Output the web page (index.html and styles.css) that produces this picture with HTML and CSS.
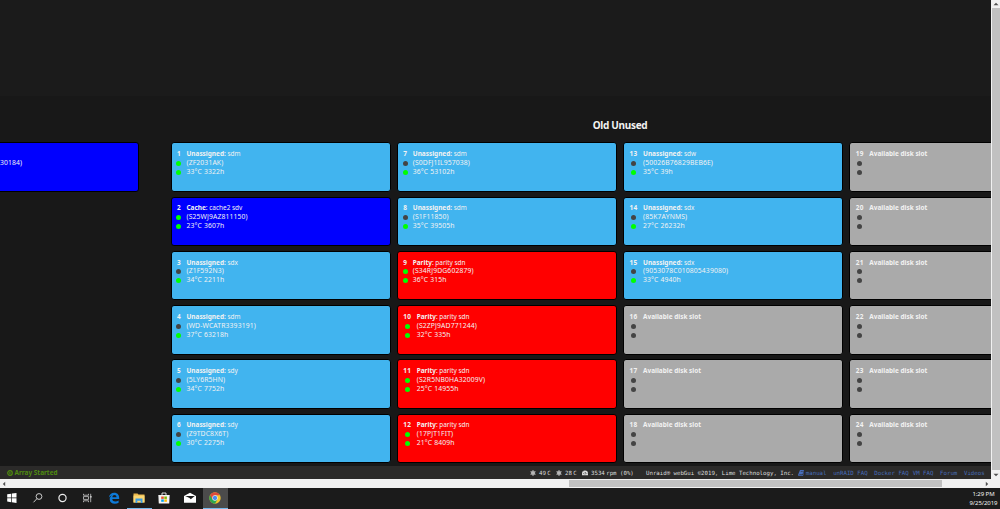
FILE: index.html
```html
<!DOCTYPE html>
<html lang="en">
<head>
  <meta charset="UTF-8">
  <title>Disk Location</title>
  <link rel="stylesheet" href="styles.css">
</head>
<body>

<div class="browser">
  <div class="view">
    <div class="page">
      <div class="top"></div>
      <h2>Old Unused</h2>
      <div class="trays">
        <div class="group previous">
          <div class="disk cache"><div class="text"><span class="serial">30184)</span></div></div>
        </div>
        <div class="group" id="disks"></div>
      </div>
    </div>

    <div class="footer">
      <span class="status">
        <svg viewBox="0 0 12 12"><circle cx="6" cy="6" r="4.600" fill="none" stroke="currentColor" stroke-width="2.400"/><path d="M4.600 3.600 8.600 6 4.600 8.400z" fill="currentColor"/></svg>
        <b>Array Started</b>
      </span>
      <span class="sensors">
        <svg viewBox="0 0 12 12"><path d="M6 .3v11.400M1.100 3.100l9.800 5.800M10.900 3.100 1.100 8.900" fill="none" stroke="currentColor" stroke-width="1.500"/><circle cx="6" cy="6" r="3.700" fill="none" stroke="currentColor" stroke-width="1.200"/></svg>
        <span class="temp">49<span class="thin"> </span>C</span>
        <svg viewBox="0 0 12 12"><path d="M6 .3v11.400M1.100 3.100l9.800 5.800M10.900 3.100 1.100 8.900" fill="none" stroke="currentColor" stroke-width="1.500"/><circle cx="6" cy="6" r="3.700" fill="none" stroke="currentColor" stroke-width="1.200"/></svg>
        <span class="temp">28<span class="thin"> </span>C</span>
        <svg viewBox="0 0 12 12"><path d="M0 10.500V7a6 6 0 0 1 12 0v3.500z" fill="currentColor"/><path d="M6 9 7 4M2 7h1.500M9 7h1.500M3.500 3.500l1 1" stroke="#2b2a29" stroke-width="1.200"/></svg>
        <span class="fan">3534<span class="thin"> </span>rpm (0%)</span>
      </span>
      <span class="copyright">Unraid® webGui ©2019, Lime Technology, Inc.</span>
      <span class="links">
        <a class="manual"><svg viewBox="0 0 12 12"><path d="M4 0h8L9 9H3q-1.500 1 0 1.500h6.500L11.500 4 12 5l-2 7H2Q-.5 11 .5 8.500z" fill="currentColor"/><path d="M5.500 3h4" stroke="#2b2a29"/></svg>manual</a>
        <a>unRAID FAQ</a>
        <a class="docker">Docker FAQ</a>
        <a>VM FAQ</a>
        <a>Forum</a>
        <a>Videos</a>
      </span>
    </div>
  </div>

  <div class="vscroll">
    <svg viewBox="0 0 8 8"><path d="M1.500 5.300 4 2.700l2.500 2.600z"/></svg>
    <div class="thumb"></div>
    <svg viewBox="0 0 8 8"><path d="M1.500 2.700 4 5.300l2.500-2.600z"/></svg>
  </div>
</div>

<div class="hscroll">
  <svg viewBox="0 0 8 8"><path d="M5.200 1.700 2.800 4l2.400 2.300z"/></svg>
  <div class="thumb"></div>
  <svg viewBox="0 0 8 8"><path d="M2.800 1.700 5.200 4 2.800 6.300z"/></svg>
</div>

<div class="taskbar">
  <div class="app">
    <svg viewBox="0 0 12 12"><path d="M1.200 2.300 5.200 1.700v3.900h-4zM5.900 1.600l4.600-.7v4.700H5.900zM1.200 6.300h4v3.900l-4-.6zM5.900 6.300h4.600V11l-4.600-.7z" fill="#fff"/></svg>
  </div>
  <div class="app">
    <svg viewBox="0 0 12 12" fill="none" stroke="#ddd" stroke-width=".9"><circle cx="7" cy="4.500" r="2.900"/><path d="M5 6.600 1.500 10.300"/></svg>
  </div>
  <div class="app">
    <svg viewBox="0 0 12 12"><circle cx="5.500" cy="6" r="3.600" fill="none" stroke="#eee" stroke-width="1.200"/></svg>
  </div>
  <div class="app">
    <svg viewBox="0 0 12 12" fill="none" stroke="#ccc" stroke-width=".8"><path d="M1.500 1.800v1.400h5V1.800M1.500 10.200V8.800h5v1.400M1.500 4.600h5v2.800h-5zM8.700 1.800v8.400"/><path d="M7.900 4.800h1.800" stroke-width="1.400"/></svg>
  </div>
  <div class="app">
    <svg viewBox="0 0 12 12"><path d="M.8 5.700C1.400 2.300 3.500.7 6.200.7c3.200 0 5 2.200 5 5.200v1.200H4.300c.1 1.800 1.500 2.400 3 2.400 1.200 0 2.300-.3 3.300-.9v2.200c-1 .6-2.300.9-3.800.9-3.100 0-5.100-1.600-5.100-4.500 0-1.700.9-3.200 2.500-4C2.500 3.600 1.500 4.500.8 5.700zM4.400 5.200h4.100C8.500 3.800 7.700 3 6.500 3S4.500 3.900 4.400 5.200z" fill="#0e7ad8"/></svg>
  </div>
  <div class="app open">
    <svg viewBox="0 0 12 12"><path d="M.5 1.500h4l1 1h6v8H.5z" fill="#e9b64a"/><path d="M.5 3.500h11v7H.5z" fill="#fbd774"/><path d="M2.500 11V6.500h7V11H7.700V8.800H4.300V11z" fill="#3d9be0"/></svg>
  </div>
  <div class="app">
    <svg viewBox="0 0 12 12"><path d="M4 3V1h4v2" fill="none" stroke="#eee" stroke-width=".9"/><path d="M.3 3h11.400l-.5 8.500H.8z" fill="#f4f4f4"/><path d="M3.200 4.500h2.600v2.400H3.200z" fill="#e8502e"/><path d="M6.300 4.500h2.600v2.400H6.300z" fill="#7fba00"/><path d="M3.200 7.400h2.600v2.400H3.200z" fill="#00a4ef"/><path d="M6.300 7.400h2.600v2.400H6.300z" fill="#ffb900"/></svg>
  </div>
  <div class="app">
    <svg viewBox="0 0 12 12"><path d="M0 4 6 .8 12 4v6.700H0z" fill="#fff"/><path d="M1.200 4h9.600L6.800 7.200 5.500 6z" fill="#1b1b1b"/></svg>
  </div>
  <div class="app open active">
    <svg viewBox="0 0 12 12"><circle cx="6" cy="6" r="5.700" fill="#f5c52c"/><path d="M6 6 1.060 3.150A5.700 5.700 0 0 0 6 11.700L8.400 7.400z" fill="#2da94f"/><path d="M1.060 3.150A5.700 5.700 0 0 1 10.940 3.150H6L3.500 7.400z" fill="#e04a3b"/><circle cx="6" cy="6" r="2.700" fill="#f4f4f4"/><circle cx="6" cy="6" r="2.150" fill="#4a8bf0"/></svg>
  </div>
  <div class="clock">1:29 PM<br>9/25/2019</div>
</div>

<script>
  // label, device, serial, temperature and hours, first led lit
  const disks = [
    ["<b>Unassigned:</b>", "sdm", "ZF2031AK", "33°C 3322h", 1],
    ["<b>Cache</b>:", "cache2 sdv", "S25WJ9AZ811150", "23°C 3607h", 1],
    ["<b>Unassigned:</b>", "sdx", "Z1F592N3", "34°C 2211h", 0],
    ["<b>Unassigned:</b>", "sdm", "WD-WCATR3393191", "37°C 63218h", 0],
    ["<b>Unassigned:</b>", "sdy", "5LY6R5HN", "34°C 7752h", 0],
    ["<b>Unassigned:</b>", "sdy", "Z9TDC8X6T", "30°C 2275h", 0],
    ["<b>Unassigned:</b>", "sdm", "S0DFJ1IL957038", "36°C 53102h", 0],
    ["<b>Unassigned:</b>", "sdm", "S1F11850", "35°C 39505h", 0],
    ["<b>Parity</b>:", "parity sdn", "S34RJ9DG602879", "36°C 315h", 1],
    ["<b>Parity</b>:", "parity sdn", "S2ZPJ9AD771244", "32°C 335h", 1],
    ["<b>Parity</b>:", "parity sdn", "S2R5NB0HA32009V", "25°C 14955h", 1],
    ["<b>Parity</b>:", "parity sdn", "17PJT1FIT", "21°C 8409h", 1],
    ["<b>Unassigned:</b>", "sdw", "50026B76829BEB6E", "35°C 39h", 0],
    ["<b>Unassigned:</b>", "sdx", "85K7AYNMS", "27°C 26232h", 0],
    ["<b>Unassigned:</b>", "sdx", "9053078C010805439080", "33°C 4940h", 0]
  ];

  let html = "";
  for (let i = 0; i < 24; i++) {
    const d = disks[i];
    const type = d ? d[0].match(/[A-Z]\w+/)[0].toLowerCase() : "empty";
    const title = d ? `${d[0]} ${d[1]}` : "<b>Available disk slot</b>";
    html += `<div class="disk ${type}">
      <div class="leds"><b>${i + 1}</b><i class="${d && d[4] ? "on" : ""}"></i><i class="${d ? "on" : ""}"></i></div>
      <div class="text"><div>${title}</div>${d ? `<div class="serial">(${d[2]})</div><div class="hours">${d[3]}</div>` : ""}</div>
    </div>`;
  }
  document.getElementById("disks").innerHTML = html;
</script>

</body>
</html>
```
FILE: styles.css
```css
* {
  box-sizing: border-box;
}
body {
  margin: 0;
  height: 509px;
  overflow: hidden;
  background: #1b1b1b;
  color: #f2f2f2;
  font-family: "Noto Sans", sans-serif;
}
svg {
  display: block;
  flex: none;
}
.browser {
  display: flex;
  height: 479px;
}
.view {
  width: 991px;
  overflow: hidden;
  background: #181818;
}
.page {
  height: 466px;
  overflow: hidden;
}
.top {
  height: 96px;
  background: #1b1b1b;
}
h2 {
  margin: 0 0 0 249px;
  padding-top: 20px;
  height: 46.300px;
  font-size: 10px;
  line-height: 18px;
  letter-spacing: -.3px;
  text-align: center;
}
.trays {
  display: flex;
  gap: 31.500px;
}
.group {
  display: grid;
  grid-auto-flow: column;
  grid-template-rows: repeat(6, 49.500px);
  grid-auto-columns: 220.400px;
  gap: 4.800px 5.900px;
  flex: none;
}
.previous {
  width: 139px;
  grid-auto-columns: 142px;
  justify-content: end;
}
.disk {
  display: flex;
  align-items: flex-start;
  gap: 5.500px;
  padding: 6.700px 5.500px;
  border: 1.500px solid #000;
  border-radius: 3px;
  font-size: 6.450px;
  line-height: 8.900px;
  white-space: nowrap;
}
.previous .disk {
  padding: 15.600px 0 0 2px;
}
.unassigned {
  background: #41b4ef;
}
.cache {
  background: #0000ff;
}
.parity {
  background: #ff0000;
}
.empty {
  background: #aaa;
}
.leds {
  display: flex;
  flex-direction: column;
  align-items: center;
}
.leds b {
  letter-spacing: .3px;
}
.leds i {
  width: 5px;
  height: 5px;
  margin: 2px -1px 1.800px;
  border-radius: 50%;
  background: #444;
}
.leds .on {
  background: #00ff00;
}
.serial,
.hours {
  font-size: 6.800px;
  letter-spacing: .13px;
}
.footer {
  display: flex;
  align-items: center;
  height: 13px;
  background: #2b2a29;
  font-family: "DejaVu Sans Mono", monospace;
  font-size: 5.720px;
  white-space: pre;
}
.footer > span {
  flex: none;
}
.footer svg {
  width: 6px;
  height: 6px;
}
.status {
  display: flex;
  align-items: center;
  gap: 1.500px;
  width: 523px;
  padding-left: 7px;
  color: #4f8a10;
  font-family: "Noto Sans", sans-serif;
  font-size: 6.450px;
}
.sensors {
  display: flex;
  align-items: center;
  gap: 3px;
  width: 116px;
  padding-left: 7px;
  color: #ddd;
}
.sensors .temp {
  width: 14px;
}
.thin {
  letter-spacing: -2px;
}
.copyright {
  width: 158.500px;
  padding-left: 7px;
  color: #ddd;
}
.links {
  display: flex;
  color: #486dba;
}
.links a {
  margin-right: 6.700px;
}
.links .manual {
  display: flex;
  align-items: center;
  gap: 2.300px;
}
.links .docker {
  margin-right: 4px;
}
.vscroll {
  display: flex;
  flex-direction: column;
  width: 9px;
  padding: 0 .5px;
  background: #f1f1f1;
}
.vscroll svg,
.hscroll svg {
  width: 8px;
  height: 8px;
  fill: #505050;
}
.vscroll .thumb {
  flex: 1;
  margin-bottom: 1.500px;
  background: #c1c1c1;
}
.hscroll {
  display: flex;
  align-items: center;
  height: 9px;
  padding-right: 9px;
  background: #f1f1f1;
}
.hscroll .thumb {
  width: 373px;
  height: 7px;
  margin: 0 auto 0 561px;
  background: #c1c1c1;
}
.taskbar {
  display: flex;
  height: 21px;
  background: #1b1b1b;
}
.app {
  display: flex;
  align-items: center;
  justify-content: center;
  width: 25.350px;
  padding-right: 1px;
  border-bottom: 1px solid transparent;
}
.app:nth-child(n + 8) {
  padding-right: 0;
}
.app svg {
  width: 12px;
  height: 12px;
}
.open {
  border-bottom-color: #76b9ed;
}
.active {
  background: #4b4b4b;
}
.clock {
  margin-left: auto;
  padding: 1.500px 2.500px 0 0;
  font-size: 6px;
  line-height: 9.500px;
  letter-spacing: -.05px;
  text-align: center;
}
```
